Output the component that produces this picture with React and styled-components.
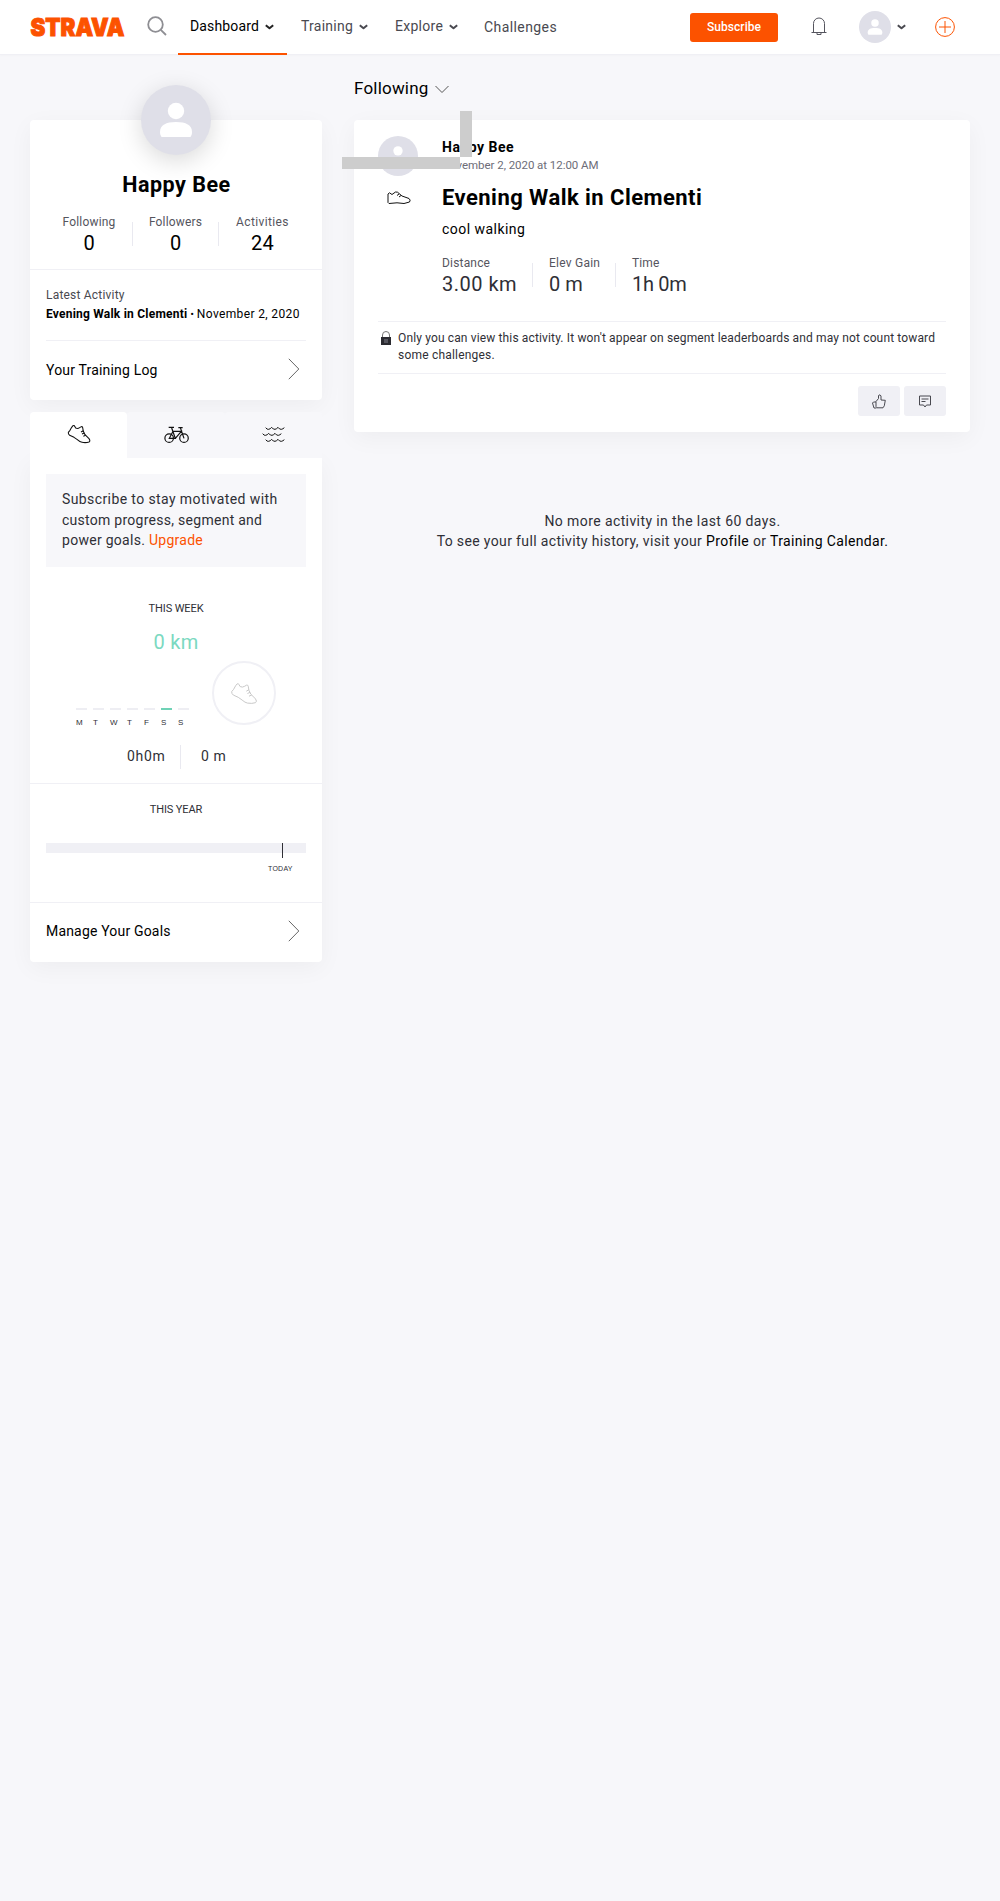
import React from "react";
import styled, { createGlobalStyle, css } from "styled-components";

const Global = createGlobalStyle`
  * { box-sizing: border-box; }
  body { margin: 0; background: #f7f7fa; font-family: Roboto, "Liberation Sans", sans-serif; color: #000; }
  a { color: inherit; text-decoration: none; }
`;
const spaced = css`letter-spacing: ${(p) => p.$ls || 0}px; white-space: pre;`;

const Page = styled.div`min-height: 1901px; width: 1000px;`;
const Nav = styled.header`
  height: 55px; background: #fff; border-bottom: 1px solid #f0f0f5;
  display: flex; align-items: flex-start; padding: 0 45px 0 30px;
  box-shadow: 0 1px 2px rgba(0, 0, 0, 0.02);
`;
const Logo = styled.svg`display: block; width: 96px; height: 30px; margin-top: 13px; flex: none; overflow: visible;`;
const SearchIcon = styled.svg`display: block; width: 20px; height: 20px; margin: 16px 0 0 21px; flex: none;`;
const NavItem = styled.a`
  height: 55px; display: flex; align-items: flex-start; flex: none;
  width: ${(p) => p.$w}px; margin-left: ${(p) => p.$ml || 0}px;
  padding: ${(p) => p.$pt || 16}px 0 0 12px; font-size: 14px; line-height: 20px;
  color: ${(p) => (p.$on ? "#000" : "#494950")};
  border-bottom: ${(p) => (p.$on ? "2px solid #fc5200" : "0")};
  svg { margin: 8px 0 0 6px; }
`;
const Label = styled.span`margin-top: ${(p) => p.$mt || 0}px; ${spaced}`;
const Subscribe = styled.button`
  width: 88px; height: 29px; margin: 13px 0 0 122px; padding: 0; border: 0; border-radius: 3px;
  background: #fc5200; color: #fff; font: 500 12px/27px Roboto, sans-serif; flex: none;
`;
const Bell = styled.svg`display: block; width: 16px; height: 19px; margin: 17px 0 0 33px; flex: none;`;
const NavUser = styled.div`display: flex; margin: 11px 0 0 32px; flex: none; > svg { margin: 13px 0 0 6px; }`;
const Plus = styled.svg`display: block; width: 20px; height: 20px; margin: 17px 0 0 29px; flex: none;`;

const Main = styled.main`display: grid; grid-template-columns: 292px 616px; column-gap: 32px; padding: 0 30px;`;
const Side = styled.aside`padding-top: 65px;`;
const Feed = styled.section`padding-top: 23px;`;
const shadow = css`box-shadow: 0 6px 24px rgba(0, 0, 0, 0.045);`;
const Card = styled.div`background: #fff; border-radius: 4px; ${shadow}`;

const AvatarRing = styled.div`
  width: ${(p) => p.$d}px; height: ${(p) => p.$d}px; border-radius: 50%; background: #dfdfe8; overflow: hidden; flex: none;
  svg { display: block; width: 100%; height: 100%; }
`;
const ProfileHead = styled.div`
  height: 150px; display: flex; flex-direction: column; align-items: center; border-bottom: 1px solid #f0f0f5;
  ${AvatarRing} { margin-top: -35px; box-shadow: 0 6px 24px rgba(0, 0, 0, 0.15); }
`;
const Name = styled.h2`margin: 16px 0 0; padding-left: 1px; font-size: 21.5px; line-height: 27px; font-weight: 700; ${spaced}`;
const Counts = styled.div`
  margin-top: 16px; width: 260px; display: grid; grid-template-columns: 86px 1px 85px 1px 1fr; text-align: center;
`;
const Rule = styled.i`width: 1px; height: 24px; margin-top: ${(p) => p.$mt || 0}px; background: #e9e9f0; display: block;`;
const StatLabel = styled.div`font-size: 12px; line-height: 16px; color: #55555e; ${spaced}`;
const StatValue = styled.div`font-size: 20px; line-height: 24px; margin-top: 1px; color: ${(p) => p.$c || "#000"}; ${spaced}`;
const Latest = styled.div`margin: 0 16px; height: 71px; padding-top: 17px; border-bottom: 1px solid #f0f0f5; color: #000;`;
const LatestTitle = styled.div`font-size: 12px; line-height: 16px; color: #494950; ${spaced}`;
const LatestLine = styled.div`font-size: 12px; line-height: 16px; margin-top: 3px; display: flex;`;
const Strong = styled.b`font-weight: 700; ${spaced}`;
const Dot = styled.b`width: 9.5px; text-align: center; font-size: 9px;`;
const LinkRow = styled.a`
  height: 59px; padding: 17px 22px 0 16px; display: flex; justify-content: space-between; font-size: 14px; line-height: 20px;
`;

const Tabs = styled.div`margin-top: 12px; height: 46px; display: grid; grid-template-columns: 97px 98px 97px;`;
const Tab = styled.div`
  display: flex; justify-content: center; padding-top: 12px; background: ${(p) => (p.$on ? "#fff" : "#f7f7fa")};
  border-radius: 4px 4px 0 0;
  svg { margin-top: ${(p) => p.$mt || 0}px; }
`;
const GoalCard = styled.div`background: #fff; border-radius: 0 0 4px 4px; ${shadow}`;
const Week = styled.div`height: 326px; padding: 16px 16px 0; border-bottom: 1px solid #f0f0f5;`;
const Promo = styled.div`
  height: 93px; padding: 15px 16px 0; background: #f7f7fa; font-size: 14px; line-height: 20.6px; color: #2f2f36;
  a { color: #fc5200; }
`;
const Line = styled.div`${spaced}`;
const Heading = styled.h3`margin: ${(p) => p.$mt}px 0 0; font-size: 11px; line-height: 16px; font-weight: 400; color: #2f2f36; text-align: center; ${spaced}`;
const WeekTotal = styled.div`margin-top: 13px; font-size: 20px; line-height: 24px; text-align: center; color: #7bd9c1; ${spaced}`;
const ChartRow = styled.div`margin-top: 7px; height: 66px; display: flex; padding-left: 30px;`;
const Days = styled.div`display: flex; gap: 6px; padding-top: 47px; width: 136px;`;
const Day = styled.div`
  width: 11px; border-top: 2px solid ${(p) => (p.$on ? "#6fd2b6" : "#eeeef3")}; padding-top: 8px;
  font: 8px/10px "Liberation Sans", sans-serif; color: #2f2f36;
`;
const Ring = styled.div`
  width: 64px; height: 64px; border: 2px solid #f0f0f5; border-radius: 50%; display: flex; align-items: center; justify-content: center;
`;
const Totals = styled.div`margin: 18px 0 0 81px; height: 24px; display: flex; font-size: 14px; line-height: 23px; color: #2f2f36;`;
const TotalTime = styled.div`width: 53px; ${spaced}`;
const TotalElev = styled.div`padding-left: 20px; ${spaced}`;
const Year = styled.div`height: 119px; padding: 1px 16px 0; border-bottom: 1px solid #f0f0f5;`;
const Track = styled.div`margin-top: 25px; height: 10px; background: #f0f0f5; padding-left: 236px;`;
const Marker = styled.div`width: 1px; height: 15px; background: #2f2f36;`;
const Today = styled.div`margin: 11px 0 0 222px; font: 7px/10px "Liberation Sans", sans-serif; color: #2f2f36; ${spaced}`;

const Filter = styled.div`
  height: 42px; display: flex; font-size: 17px; line-height: 20px;
  svg { margin: 7px 0 0 6px; }
`;
const Activity = styled(Card)`height: 312px; padding: 16px 24px 0; position: relative;`;
const ActivityHead = styled.div`display: flex; gap: 24px; height: 47px;`;
const Owner = styled.div`padding-top: 3px; font-size: 14px; line-height: 16px; font-weight: 700; ${spaced}`;
const When = styled.div`margin-top: 3px; font-size: 11.5px; line-height: 15px; color: #6d6d78; ${spaced}`;
const ActivityBody = styled.div`display: grid; grid-template-columns: 64px 1fr; height: 138px;`;
const Sport = styled.div`padding: 8px 0 0 9px; svg { display: block; }`;
const Title = styled.h1`margin: 1px 0 0; font-size: 22px; line-height: 28px; font-weight: 700; ${spaced}`;
const Note = styled.p`margin: 7px 0 0; font-size: 14px; line-height: 20px; ${spaced}`;
const Stats = styled.div`margin-top: 16px; display: flex;`;
const Stat = styled.div`width: ${(p) => p.$w}px; margin-left: ${(p) => p.$ml || 0}px;`;
const Privacy = styled.div`
  height: 53px; border: 1px solid #f0f0f5; border-width: 1px 0; padding: 8px 0 0 3px; display: flex;
  font-size: 12px; line-height: 17px; color: #2f2f36;
  svg { margin: 1px 7px 0 0; flex: none; }
`;
const Actions = styled.div`display: flex; justify-content: flex-end; gap: 4px; padding-top: 12px;`;
const Action = styled.button`
  width: 42px; height: 30px; border: 0; border-radius: 3px; background: #f0f0f5; padding: 0;
  display: flex; align-items: center; justify-content: center;
`;
const BarH = styled.div`position: absolute; left: -12px; top: 37px; width: 118px; height: 12px; background: #cdcdcd;`;
const BarV = styled.div`position: absolute; left: 106px; top: -9px; width: 12px; height: 46px; background: #cdcdcd;`;
const End = styled.div`padding: 79px 0 0 1px; text-align: center; font-size: 14px; line-height: 20.4px; color: #2f2f36; a { color: #000; }`;

const Caret = ({ c }) => (
  <svg width="9" height="6" viewBox="0 0 9 6"><path d="M.8 1.200 4.500 4.300 8.200 1.200" fill="none" stroke={c} strokeWidth="2" strokeLinejoin="round" /></svg>
);
const Arrow = () => (
  <svg width="12" height="22" viewBox="0 0 12 22"><path d="M.8.8 10.800 11 .8 21.200" fill="none" stroke="#666" strokeWidth="1" /></svg>
);
const Person = () => (
  <svg viewBox="0 0 70 70">
    <circle cx="35" cy="26" r="8.200" fill="#fff" />
    <path d="M20.500 52c-1-1.500-1.500-3-1.500-5 0-7 6-10 16-10s16 3 16 10c0 2-.5 3.500-1.500 5z" fill="#fff" />
  </svg>
);
const Shoe = ({ w, h, c, sw }) => (
  <svg width={w} height={h} viewBox="142 492 72 60" fill="none" stroke={c} strokeWidth={sw} strokeLinejoin="round">
    <path d="M146 517 151 511 156 502 160 497 Q164 495 165 499 L168 504 Q174 507 180 503 L185 500 Q188 499 189 503 L191 514 196 524 208 536 Q213 543 208 546 Q199 549 187 547 Q181 546 173 539 L163 532 150 526 Q145 522 146 517Z" />
    <path d="M191 512 184 516M194 519 187 522M198 526 191 529" />
  </svg>
);
const Bike = () => (
  <svg width="25" height="18" viewBox="430 498 75 54" fill="none" stroke="#111" strokeWidth="3.600">
    <circle cx="445.500" cy="534.500" r="12.800" /><circle cx="490" cy="534.500" r="12.800" />
    <path d="M444 502h16M453 504 464 535H446L457 514H482L464 535M473 503h13M479 503 490 535" />
  </svg>
);
const wave = (x, y) => `M${x} ${y}q4 6 9 5t9-6q5 7 10 6t9-6q5 7 10 6t9-5`;
const Waves = () => (
  <svg width="23" height="18" viewBox="725 497 69 54" fill="none" stroke="#111" strokeWidth="3">
    <path d={wave(736, 502) + wave(727, 520) + wave(736, 538)} />
  </svg>
);

const days = ["M", "T", "W", "T", "F", "S", "S"];

export default function App() {
  return (
    <Page>
      <Global />
      <Nav>
        <Logo viewBox="0 0 96 30">
          <text x="0.500" y="23" textLength="94" lengthAdjust="spacingAndGlyphs" fontFamily="Inter" fontWeight="900" fontSize="24" fill="#fc5200" stroke="#fc5200" strokeWidth="1">STRAVA</text>
        </Logo>
        <SearchIcon viewBox="0 0 20 20" fill="none" stroke="#8e8e93" strokeWidth="1.800"><circle cx="8.500" cy="8.500" r="7.300" /><path d="M13.800 13.800 19 19" /></SearchIcon>
        <NavItem $w={109} $ml={11} $on><Label $ls={0.15}>Dashboard</Label><Caret c="#222" /></NavItem>
        <NavItem $w={94} $ml={2}><Label $ls={0.25}>Training</Label><Caret c="#494950" /></NavItem>
        <NavItem $w={89}><Label $ls={0.28}>Explore</Label><Caret c="#494950" /></NavItem>
        <NavItem $w={96} $pt={17}><Label $ls={0.42}>Challenges</Label></NavItem>
        <Subscribe><Label $ls={0.05}>Subscribe</Label></Subscribe>
        <Bell viewBox="0 0 16 19" fill="none" stroke="#55555e"><path d="M2.500 15V6.500a5.500 5.500 0 0 1 11 0V15M.5 15.500h15M6 16v1.500h4V16" /></Bell>
        <NavUser><AvatarRing $d={32}><Person /></AvatarRing><Caret c="#494950" /></NavUser>
        <Plus viewBox="0 0 20 20" fill="none" stroke="#fc5200"><circle cx="10" cy="10" r="9.400" /><path d="M10 4v12M4 10h12" /></Plus>
      </Nav>
      <Main>
        <Side>
          <Card>
            <ProfileHead>
              <AvatarRing $d={70}><Person /></AvatarRing>
              <Name $ls={0.5}>Happy Bee</Name>
              <Counts>
                <div><StatLabel $ls={0.2}>Following</StatLabel><StatValue>0</StatValue></div><Rule $mt={8} />
                <div><StatLabel $ls={0.17}>Followers</StatLabel><StatValue>0</StatValue></div><Rule $mt={8} />
                <div><StatLabel $ls={0.38}>Activities</StatLabel><StatValue $ls={0.3}>24</StatValue></div>
              </Counts>
            </ProfileHead>
            <Latest>
              <LatestTitle $ls={0.2}>Latest Activity</LatestTitle>
              <LatestLine><Strong $ls={0.22}>Evening Walk in Clementi</Strong><Dot>•</Dot><Label $ls={0.36}>November 2, 2020</Label></LatestLine>
            </Latest>
            <LinkRow><Label $mt={2} $ls={0.18}>Your Training Log</Label><Arrow /></LinkRow>
          </Card>
          <Tabs>
            <Tab $on><Shoe w={24} h={20} c="#111" sw={3.2} /></Tab><Tab $mt={2}><Bike /></Tab><Tab $mt={2}><Waves /></Tab>
          </Tabs>
          <GoalCard>
            <Week>
              <Promo>
                <Line $ls={0.4}>Subscribe to stay motivated with</Line>
                <Line $ls={0.27}>custom progress, segment and</Line>
                <Line $ls={0.28}>power goals. <a href="#upgrade">Upgrade</a></Line>
              </Promo>
              <Heading $mt={34} $ls={-0.1}>THIS WEEK</Heading>
              <WeekTotal $ls={0.3}>0 km</WeekTotal>
              <ChartRow>
                <Days>{days.map((d, i) => <Day key={i} $on={i === 5}>{d}</Day>)}</Days>
                <Ring><Shoe w={28} h={23} c="#c8c8c8" sw={2.6} /></Ring>
              </ChartRow>
              <Totals><TotalTime $ls={0.7}>0h0m</TotalTime><Rule /><TotalElev $ls={0.6}>0 m</TotalElev></Totals>
            </Week>
            <Year>
              <Heading $mt={17} $ls={-0.1}>THIS YEAR</Heading>
              <Track><Marker /></Track>
              <Today $ls={0.25}>TODAY</Today>
            </Year>
            <LinkRow><Label $mt={1} $ls={0.18}>Manage Your Goals</Label><Arrow /></LinkRow>
          </GoalCard>
        </Side>
        <Feed>
          <Filter><Label $ls={0.2}>Following</Label>
            <svg width="14" height="9" viewBox="0 0 14 9"><path d="M.5 1 7 7.500 13.500 1" fill="none" stroke="#555" /></svg></Filter>
          <Activity>
            <ActivityHead>
              <AvatarRing $d={40}><Person /></AvatarRing>
              <div><Owner $ls={0.5}>Happy Bee</Owner><When $ls={-0.05}>November 2, 2020 at 12:00 AM</When></div>
            </ActivityHead>
            <ActivityBody>
              <Sport>
                <svg width="24" height="14" viewBox="0 0 24 14" fill="none" stroke="#111" strokeLinejoin="round"><path d="M1 9V3L2.500 1.800 5 3.500 8.500 1 10.500 1.200 15 5 22 7.500Q24 9 22.500 11L17 12.500 10 11.800 2 12.500 1 11.500Z" /><path d="M10 4.500 12 3M12 6 14 4.500" /></svg>
              </Sport>
              <div>
                <Title $ls={0.45}>Evening Walk in Clementi</Title>
                <Note $ls={0.46}>cool walking</Note>
                <Stats>
                  <Stat $w={90}><StatLabel $ls={0.18}>Distance</StatLabel><StatValue $c="#2f2f36" $ls={0.5}>3.00 km</StatValue></Stat><Rule $mt={8} />
                  <Stat $w={66} $ml={16}><StatLabel $ls={0.24}>Elev Gain</StatLabel><StatValue $c="#2f2f36">0 m</StatValue></Stat><Rule $mt={8} />
                  <Stat $w={70} $ml={16}><StatLabel $ls={0.1}>Time</StatLabel><StatValue $c="#2f2f36" $ls={-0.3}>1h 0m</StatValue></Stat>
                </Stats>
              </div>
            </ActivityBody>
            <Privacy>
              <svg width="10" height="14" viewBox="0 0 10 14"><path d="M1.500 6V4a3.500 3.500 0 0 1 7 0v2" fill="none" stroke="#777" /><path d="M0 6h10v8H0z" fill="#2a2a30" /><path d="M3 8h4v4H3z" fill="#55555e" /></svg>
              <div>
                <Line $ls={0.142}>Only you can view this activity. It won't appear on segment leaderboards and may not count toward</Line>
                <Line $ls={0.2}>some challenges.</Line>
              </div>
            </Privacy>
            <Actions>
              <Action><svg width="14" height="15" viewBox="0 0 14 15" fill="none" stroke="#494950"><path d="M4 7.500 6.500 4.500V1.500L8 .8 9 2v4l4.300.3-1 5.500-1.300 2H5L4 12.500zM4 8H1.500l-1 1 1.500 5H4.500" /></svg></Action>
              <Action><svg width="12" height="13" viewBox="0 0 12 13" fill="none" stroke="#494950"><path d="M.5 1h11v9H7.500L6 12 4.500 10H.5zM2.500 4h7M2.500 6.500h4" /></svg></Action>
            </Actions>
            <BarH /><BarV />
          </Activity>
          <End>
            <Line $ls={0.4}>No more activity in the last 60 days.</Line>
            <Line $ls={0.36}>To see your full activity history, visit your <a href="#profile">Profile</a> or <a href="#calendar">Training Calendar.</a></Line>
          </End>
        </Feed>
      </Main>
    </Page>
  );
}
